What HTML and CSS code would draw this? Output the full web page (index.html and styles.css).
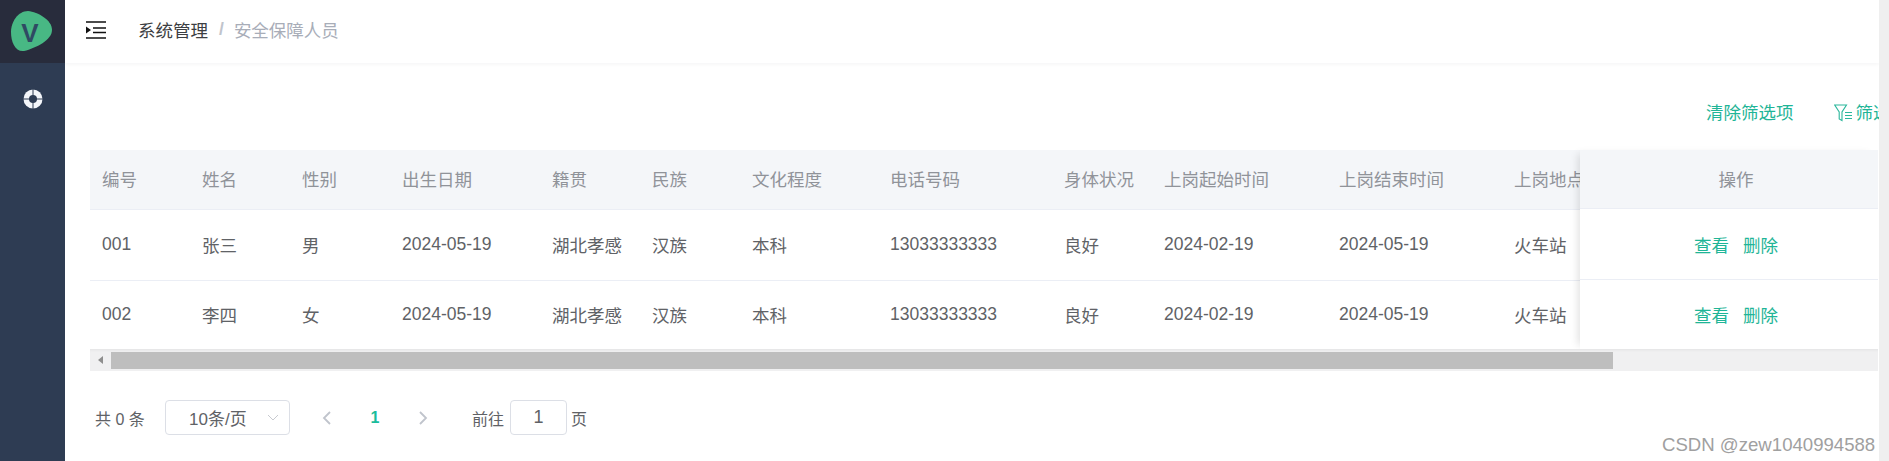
FILE: index.html
```html
<!DOCTYPE html>
<html lang="zh-CN">
<head>
<meta charset="utf-8">
<title>安全保障人员</title>
<link rel="stylesheet" href="styles.css">
</head>
<body>
<div class="app">
  <aside class="sidebar">
    <div class="logo">
      <svg width="65" height="63" viewBox="0 0 65 63">
        <path d="M28 11C38 12 52 20 52 30C52 40 36 48 24 51C15 52 11 42 11 32C11 22 18 11 28 11Z" fill="#48b884"/>
        <text x="30" y="42" class="logo-v" text-anchor="middle">V</text>
      </svg>
    </div>
    <div class="menu-item">
      <svg width="20" height="20" viewBox="0 0 20 20">
        <circle cx="10" cy="10" r="9.5" fill="#f4f6fa"/>
        <path d="M10 0V20M0 10H20" stroke="#2e3c53" stroke-width="1"/>
        <circle cx="10" cy="10" r="4" fill="#2e3c53"/>
      </svg>
    </div>
  </aside>
  <main class="main">
    <header class="topbar">
      <svg class="hamburger" width="20" height="18" viewBox="0 0 20 18">
        <path d="M0 1H20M7 7H20M7 11.500H20M0 17H20" stroke="#111" stroke-width="1.600"/>
        <path d="M0 5.500L5 9L0 12.500Z" fill="#111"/>
      </svg>
      <nav class="crumbs">
        <span class="crumb-parent">系统管理</span>
        <span class="crumb-sep">/</span>
        <span class="crumb-current">安全保障人员</span>
      </nav>
    </header>
    <div class="toolbar">
      <span class="tool-link">清除筛选项</span>
      <span class="tool-link tool-filter">
        <svg width="18" height="18" viewBox="0 0 18 18">
          <path d="M0.700 1H12.500L8 8V16.500L5.200 15V8Z" fill="none" stroke="#2bb79c" stroke-width="1.100"/>
          <path d="M11 8.500H18M11 11.500H18M11 14.500H18" stroke="#2bb79c" stroke-width="1"/>
        </svg>
        筛选
      </span>
    </div>
    <section class="table-wrap">
      <div class="table-body">
        <div class="table-scroll">
          <table class="grid">
            <colgroup>
              <col class="c100"><col class="c100"><col class="c100"><col class="c150"><col class="c100"><col class="c100"><col class="c138"><col class="c174"><col class="c100"><col class="c175"><col class="c175"><col class="c150">
            </colgroup>
            <thead>
              <tr><th>编号</th><th>姓名</th><th>性别</th><th>出生日期</th><th>籍贯</th><th>民族</th><th>文化程度</th><th>电话号码</th><th>身体状况</th><th>上岗起始时间</th><th>上岗结束时间</th><th>上岗地点</th></tr>
            </thead>
            <tbody>
              <tr class="row-a"><td>001</td><td>张三</td><td>男</td><td>2024-05-19</td><td>湖北孝感</td><td>汉族</td><td>本科</td><td>13033333333</td><td>良好</td><td>2024-02-19</td><td>2024-05-19</td><td>火车站</td></tr>
              <tr class="row-b"><td>002</td><td>李四</td><td>女</td><td>2024-05-19</td><td>湖北孝感</td><td>汉族</td><td>本科</td><td>13033333333</td><td>良好</td><td>2024-02-19</td><td>2024-05-19</td><td>火车站</td></tr>
            </tbody>
          </table>
        </div>
        <div class="fixed-col">
          <div class="fixed-head">操作</div>
          <div class="fixed-cell row-a"><span>查看</span><span>删除</span></div>
          <div class="fixed-cell row-b"><span>查看</span><span>删除</span></div>
        </div>
      </div>
      <div class="hscroll">
        <span class="hscroll-arrow"></span>
        <span class="hscroll-thumb"></span>
      </div>
    </section>
    <footer class="pager">
      <span class="pager-total">共 0 条</span>
      <div class="pager-select">
        <span>10条/页</span>
        <svg width="12" height="7" viewBox="0 0 12 7"><path d="M1 1L6 6L11 1" fill="none" stroke="#c8cad0" stroke-width="1"/></svg>
      </div>
      <svg class="pager-prev" width="9" height="14" viewBox="0 0 9 14"><path d="M8 1L2 7L8 13" fill="none" stroke="#c0c4cc" stroke-width="1.800"/></svg>
      <span class="pager-num">1</span>
      <svg class="pager-next" width="9" height="14" viewBox="0 0 9 14"><path d="M1 1L7 7L1 13" fill="none" stroke="#c0c4cc" stroke-width="1.800"/></svg>
      <span class="pager-goto">前往</span>
      <div class="pager-input">1</div>
      <span class="pager-unit">页</span>
    </footer>
  </main>
  <div class="vscroll"></div>
</div>
<div class="watermark">CSDN @zew1040994588</div>
</body>
</html>
```
FILE: styles.css
```css
* { box-sizing: border-box; }
html, body { margin: 0; height: 100%; overflow: hidden; background: #fff; }
body {
  font-family: "Liberation Sans", "Noto Sans CJK SC", sans-serif;
  font-size: 17.5px;
  color: #606266;
}
.app { display: flex; height: 461px; }
.sidebar { width: 65px; flex: none; background: #2e3c53; }
.logo { height: 63px; background: #282c3c; }
.logo svg { display: block; }
.logo-v { font: bold 26px "Liberation Sans", sans-serif; fill: #2f4a63; }
.menu-item { display: flex; justify-content: center; padding-top: 26px; }
.main { flex: 1; min-width: 0; overflow: hidden; }
.vscroll { width: 10px; flex: none; background: #efefef; }

.topbar {
  height: 63px;
  display: flex;
  align-items: center;
  padding: 0 0 3px 21px;
  box-shadow: 0 1px 4px rgba(0, 21, 41, 0.05);
}
.hamburger { flex: none; }
.crumbs { margin: 0 0 2px 32px; display: flex; align-items: center; }
.crumb-parent { color: #3c3e42; }
.crumb-sep { color: #c0c4cc; font-weight: bold; margin: 0 10px 0 11px; }
.crumb-current { color: #a8adb8; }

.toolbar {
  height: 87px;
  display: flex;
  justify-content: flex-start;
  align-items: flex-start;
  padding: 39px 0 0 1641px;
  white-space: nowrap;
  line-height: 22px;
  width: 1900px;
}
.tool-link { color: #1fb597; }
.tool-filter { margin-left: 40px; display: flex; align-items: center; gap: 4px; }

.table-wrap { margin: 0 1px 0 25px; }
.table-body { display: flex; height: 199px; }
.table-scroll { flex: 1; min-width: 0; overflow: hidden; }
.grid { table-layout: fixed; border-collapse: collapse; width: 1562px; }
.c100 { width: 100px; }
.c138 { width: 138px; }
.c150 { width: 150px; }
.c174 { width: 174px; }
.c175 { width: 175px; }
.grid th, .grid td {
  padding: 0 0 0 12px;
  text-align: left;
  font-weight: normal;
  white-space: nowrap;
  overflow: hidden;
}
.grid th { height: 59px; padding-bottom: 2px; background: #f4f6f9; color: #909399; border-bottom: 1px solid #ebeef5; }
.grid td { border-bottom: 1px solid #ebeef5; }
.row-a td { height: 71px; }
.row-b td { height: 69px; border-bottom: 0; }

.fixed-col { width: 298px; flex: none; box-shadow: -6px 0 8px -4px rgba(0, 0, 0, 0.12); background: #fff; }
.fixed-head {
  height: 59px;
  background: #f4f6f9;
  color: #909399;
  border-bottom: 1px solid #ebeef5;
  display: flex;
  align-items: center;
  justify-content: center;
  padding: 0 0 2px 14px;
}
.fixed-cell {
  display: flex;
  align-items: center;
  justify-content: center;
  gap: 14px;
  padding-left: 14px;
  color: #1fb597;
}
.fixed-cell.row-a { height: 71px; border-bottom: 1px solid #ebeef5; }
.fixed-cell.row-b { height: 69px; }

.hscroll {
  height: 22px;
  background: #f0f0f1;
  display: flex;
  align-items: center;
  padding-left: 21px;
  position: relative;
  box-shadow: inset 0 3px 3px -2px rgba(0, 0, 0, 0.06);
}
.hscroll-thumb { width: 1502px; height: 17px; background: #bebebe; }
.hscroll-arrow {
  position: absolute;
  left: 8px;
  top: 7px;
  border-style: solid;
  border-width: 4px 5px 4px 0;
  border-color: transparent #8e8e8e transparent transparent;
}

.pager {
  display: flex;
  align-items: center;
  margin: 29px 0 0 30px;
  height: 35px;
  font-size: 16px;
}
.pager-total { width: 70px; flex: none; }
.pager-select {
  width: 125px;
  height: 35px;
  flex: none;
  border: 1px solid #dcdfe6;
  border-radius: 4px;
  display: flex;
  align-items: center;
  justify-content: space-between;
  padding: 0 10px 0 23px;
  font-size: 17px;
}
.pager-prev { flex: none; margin-left: 32px; }
.pager-next { flex: none; }
.pager-num { width: 88px; flex: none; text-align: center; color: #1abc9c; font-weight: bold; }
.pager-goto { margin-left: 44px; }
.pager-input {
  width: 57px;
  height: 35px;
  flex: none;
  margin-left: 6px;
  border: 1px solid #dcdfe6;
  border-radius: 4px;
  display: flex;
  align-items: center;
  justify-content: center;
  font-size: 18px;
}
.pager-unit { margin-left: 4px; }

.watermark {
  position: absolute;
  left: 1662px;
  top: 435px;
  font-size: 18.600px;
  line-height: 20px;
  color: #a0a0a0;
  white-space: nowrap;
}
```
